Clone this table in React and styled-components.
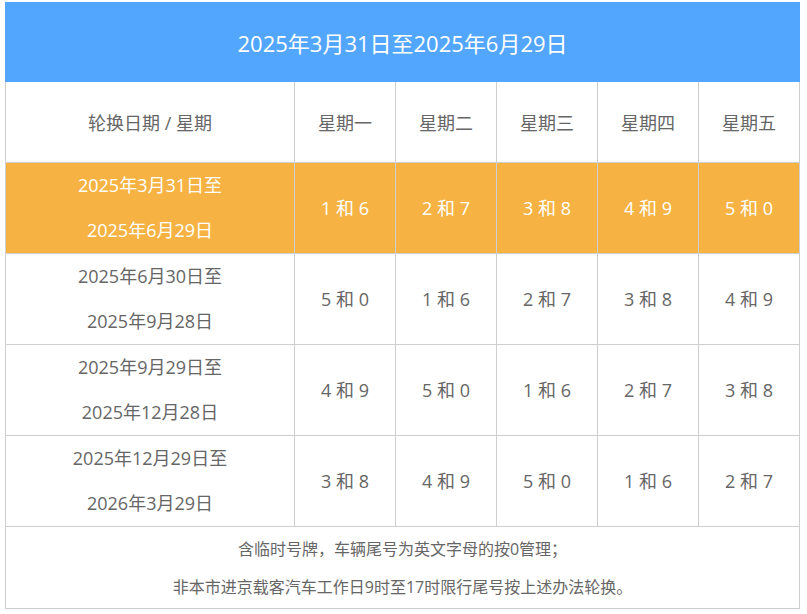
import styled, { createGlobalStyle } from "styled-components";

const GlobalStyle = createGlobalStyle`
  body {
    margin: 0;
    background: #ffffff;
    font-family: "Open Sans", "Noto Sans CJK SC", sans-serif;
  }
`;

const Page = styled.div`
  padding: 2px 0 0 5px;
`;

const Table = styled.table`
  width: 795px;
  border-collapse: collapse;
  table-layout: fixed;
  color: #666666;
`;

const Col = styled.col`
  width: ${(p) => (p.$wide ? "289px" : "101px")};
`;

const TitleCell = styled.th`
  height: 78px;
  background: #52a6fd;
  border: 1px solid #52a6fd;
  color: #ffffff;
  font-size: 22px;
  font-weight: 400;
  text-align: center;
  padding: 0;
`;

const HeadCell = styled.th`
  height: 80px;
  border: 1px solid #cfcfcf;
  font-size: 18px;
  font-weight: 400;
  text-align: center;
  padding: 0;
`;

const Row = styled.tr`
  background: ${(p) => (p.$active ? "#f6b343" : "#ffffff")};
  color: ${(p) => (p.$active ? "#ffffff" : "#666666")};
`;

const Cell = styled.td`
  border: 1px solid #cfcfcf;
  font-size: 18px;
  line-height: 45px;
  text-align: center;
  padding: 0;
  white-space: nowrap;
`;

const NoteCell = styled.td`
  border: 1px solid #cfcfcf;
  font-size: 16px;
  line-height: 38px;
  text-align: center;
  padding: 3px 0 2px;
  color: #666666;
`;

const days = ["星期一", "星期二", "星期三", "星期四", "星期五"];

const rows = [
  { from: "2025年3月31日至", to: "2025年6月29日", nums: ["1 和 6", "2 和 7", "3 和 8", "4 和 9", "5 和 0"], active: true },
  { from: "2025年6月30日至", to: "2025年9月28日", nums: ["5 和 0", "1 和 6", "2 和 7", "3 和 8", "4 和 9"] },
  { from: "2025年9月29日至", to: "2025年12月28日", nums: ["4 和 9", "5 和 0", "1 和 6", "2 和 7", "3 和 8"] },
  { from: "2025年12月29日至", to: "2026年3月29日", nums: ["3 和 8", "4 和 9", "5 和 0", "1 和 6", "2 和 7"] },
];

export default function App() {
  return (
    <Page>
      <GlobalStyle />
      <Table>
        <colgroup>
          <Col $wide />
          {days.map((d) => (
            <Col key={d} />
          ))}
        </colgroup>
        <thead>
          <tr>
            <TitleCell colSpan={6}>2025年3月31日至2025年6月29日</TitleCell>
          </tr>
          <tr>
            <HeadCell>轮换日期 / 星期</HeadCell>
            {days.map((d) => (
              <HeadCell key={d}>{d}</HeadCell>
            ))}
          </tr>
        </thead>
        <tbody>
          {rows.map((r) => (
            <Row key={r.from} $active={r.active}>
              <Cell>
                {r.from}
                <br />
                {r.to}
              </Cell>
              {r.nums.map((n, i) => (
                <Cell key={i}>{n}</Cell>
              ))}
            </Row>
          ))}
          <tr>
            <NoteCell colSpan={6}>
              含临时号牌，车辆尾号为英文字母的按0管理；
              <br />
              非本市进京载客汽车工作日9时至17时限行尾号按上述办法轮换。
            </NoteCell>
          </tr>
        </tbody>
      </Table>
    </Page>
  );
}
